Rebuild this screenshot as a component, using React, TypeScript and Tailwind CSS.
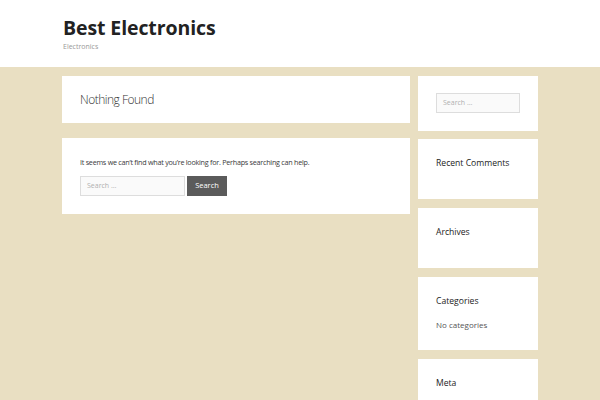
const font = { fontFamily: '"Open Sans", "Noto Sans", sans-serif' };

const SearchField = ({ className }: { className: string }) => (
  <div
    className={`flex items-center border border-[#dddddd] bg-[#fafafa] px-[6px] text-[7px] text-[#b0b0b0] ${className}`}
  >
    Search …
  </div>
);

const Widget = ({ title, height, children }: { title: string; height: string; children?: React.ReactNode }) => (
  <div className={`bg-white px-[18px] pt-[16px] ${height}`}>
    <h2 className="text-[8.6px] leading-[16px] text-[#222222]">{title}</h2>
    {children}
  </div>
);

export default function App() {
  return (
    <div className="min-h-[400px] bg-[#e9dfc2]" style={font}>
      <header className="h-[67px] bg-white">
        <div className="mx-auto w-[476px] pl-[1px] pt-[15px]">
          <h1 className="text-[19.5px] font-bold leading-[26px] tracking-[-0.1px] text-[#222222]">Best Electronics</h1>
          <p className="mt-[1px] text-[7px] leading-[9px] text-[#999999]">Electronics</p>
        </div>
      </header>

      <div className="mx-auto flex w-[476px] gap-[8px] pt-[9px]">
        <main className="flex w-[348px] flex-col gap-[15px]">
          <div className="flex h-[47px] items-center bg-white px-[18px]">
            <h1 className="text-[12px] font-light tracking-[-0.5px] text-[#333333]">Nothing Found</h1>
          </div>
          <div className="h-[76px] bg-white px-[18px] pt-[18px]">
            <p className="text-[7.2px] leading-[12px] tracking-[-0.25px] text-[#3a3a3a]">
              It seems we can’t find what you’re looking for. Perhaps searching can help.
            </p>
            <div className="mt-[8px] flex gap-[2px]">
              <SearchField className="h-[20px] w-[105px] text-[7.5px]" />
              <button className="flex h-[20px] w-[40px] items-center justify-center bg-[#5b5b5b] text-[7.5px] text-white">
                Search
              </button>
            </div>
          </div>
        </main>

        <aside className="flex w-[120px] flex-col gap-[8px]">
          <div className="h-[55px] bg-white px-[18px] pt-[17px]">
            <SearchField className="h-[20px] w-[84px]" />
          </div>
          <div className="h-[60px]">
            <Widget title="Recent Comments" height="h-[60px]" />
          </div>
          <div className="mt-[1px]">
            <Widget title="Archives" height="h-[60px]" />
          </div>
          <div className="mt-[1px]">
            <Widget title="Categories" height="h-[73px]">
              <p className="mt-[10px] text-[8px] leading-[12px] text-[#555555]">No categories</p>
            </Widget>
          </div>
          <div className="mt-[1px]">
            <Widget title="Meta" height="h-[60px]" />
          </div>
        </aside>
      </div>
    </div>
  );
}
